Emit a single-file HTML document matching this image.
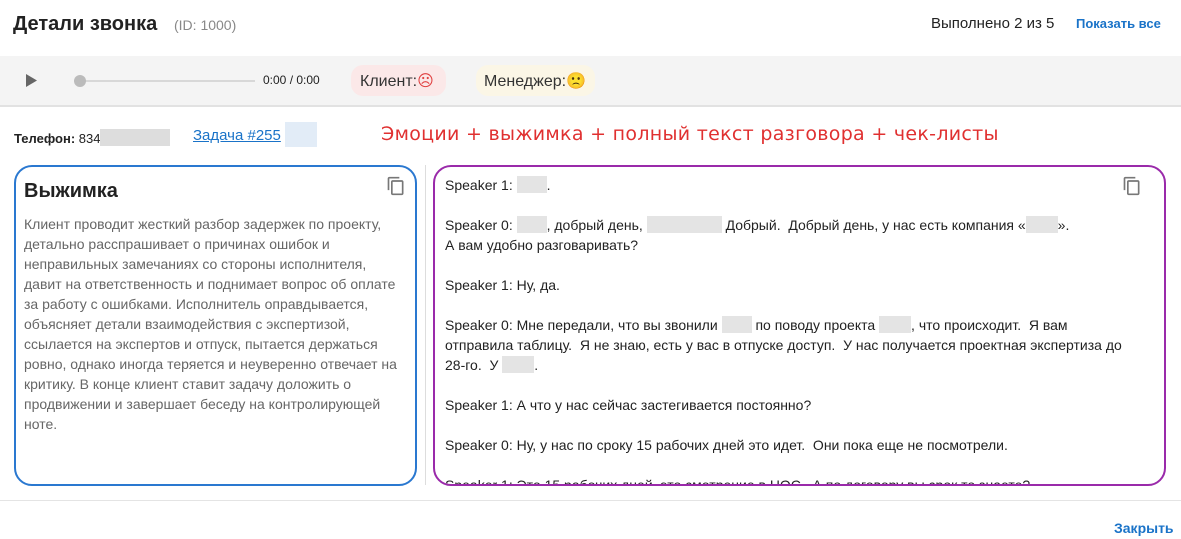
<!DOCTYPE html>
<html><head><meta charset="utf-8"><style>
body{margin:0;width:1181px;height:539px;overflow:hidden;background:#fff;font-family:"Liberation Sans",sans-serif;position:relative;color:#222}
.a{position:absolute}
.blur{display:inline-block;background:#e4e4e4;height:17px;vertical-align:-3px}
.tr p{margin:0 0 20px 0}
</style></head><body>
<div class="a" style="left:13px;top:13px;font-size:20px;font-weight:bold;color:#222">Детали звонка</div>
<div class="a" style="left:174px;top:17px;font-size:14px;color:#888">(ID: 1000)</div>
<div class="a" style="left:931px;top:15px;font-size:15px;color:#222">Выполнено 2 из 5</div>
<div class="a" style="left:1076px;top:16px;font-size:13px;color:#1a73c8;font-weight:bold">Показать все</div>
<div class="a" style="left:0;top:56px;width:1181px;height:49px;background:#f4f4f4;border-bottom:2px solid #e2e2e2"></div>
<svg class="a" style="left:26px;top:74px" width="11" height="13"><path d="M0 0L11 6.5L0 13Z" fill="#666"/></svg>
<div class="a" style="left:80px;top:80px;width:175px;height:2px;background:#d8d8d8"></div>
<div class="a" style="left:74px;top:75px;width:12px;height:12px;border-radius:50%;background:#bbb"></div>
<div class="a" style="left:263px;top:73px;font-size:12px;color:#222">0:00 / 0:00</div>
<div class="a" style="left:351px;top:65px;width:95px;height:31px;border-radius:12px;background:#fbe8e8"></div>
<div class="a" style="left:360px;top:71px;font-size:16px;color:#333">Клиент:<span style="color:#e04040">☹</span></div>
<div class="a" style="left:476px;top:65px;width:119px;height:31px;border-radius:12px;background:#fbf6e6"></div>
<div class="a" style="left:484px;top:71px;font-size:16px;color:#333">Менеджер:<span style="color:#f0a020">🙁</span></div>
<div class="a" style="left:14px;top:129px;font-size:13px;color:#222;white-space:nowrap"><b>Телефон:</b> 834<span class="blur" style="width:70px;background:#ddd"></span></div>
<div class="a" style="left:193px;top:127px;font-size:15px;color:#1a73c8;text-decoration:underline">Задача #255</div>
<div class="a" style="left:285px;top:122px;width:32px;height:25px;background:#e2ecf7"></div>
<div class="a" style="left:381px;top:123px;font-size:19px;color:#e03030;font-family:'Comic Sans MS','DejaVu Sans',sans-serif;letter-spacing:0.3px;white-space:nowrap">Эмоции + выжимка + полный текст разговора + чек-листы</div>
<div class="a" style="left:14px;top:165px;width:399px;height:317px;border:2px solid #2a78d0;border-radius:18px"></div>
<div class="a" style="left:24px;top:180px;font-size:20px;font-weight:bold;color:#222">Выжимка</div>
<svg class="a" style="left:386px;top:176px" width="20" height="20" viewBox="0 0 24 24"><path d="M16 1H4c-1.1 0-2 .9-2 2v14h2V3h12V1zm3 4H8c-1.1 0-2 .9-2 2v14c0 1.1.9 2 2 2h11c1.1 0 2-.9 2-2V7c0-1.1-.9-2-2-2zm0 16H8V7h11v14z" fill="#777"/></svg>
<div class="a" style="left:24px;top:214px;width:380px;font-size:14px;line-height:20px;color:#666">Клиент проводит жесткий разбор задержек по проекту, детально расспрашивает о причинах ошибок и неправильных замечаниях со стороны исполнителя, давит на ответственность и поднимает вопрос об оплате за работу с ошибками. Исполнитель оправдывается, объясняет детали взаимодействия с экспертизой, ссылается на экспертов и отпуск, пытается держаться ровно, однако иногда теряется и неуверенно отвечает на критику. В конце клиент ставит задачу доложить о продвижении и завершает беседу на контролирующей ноте.</div>
<div class="a" style="left:425px;top:165px;width:1px;height:320px;background:#ddd"></div>
<div class="a" style="left:433px;top:165px;width:729px;height:317px;border:2px solid #9a2aaa;border-radius:18px;overflow:hidden">
<div class="tr" style="padding:8px 0 0 10px;font-size:14px;line-height:20px;color:#222;width:690px">
<p>Speaker 1: <span class="blur" style="width:30px"></span>.</p>
<p>Speaker 0: <span class="blur" style="width:30px"></span>, добрый день, <span class="blur" style="width:75px"></span> Добрый.&nbsp; Добрый день, у нас есть компания «<span class="blur" style="width:32px"></span>».<br>А вам удобно разговаривать?</p>
<p>Speaker 1: Ну, да.</p>
<p>Speaker 0: Мне передали, что вы звонили <span class="blur" style="width:30px"></span> по поводу проекта <span class="blur" style="width:32px"></span>, что происходит.&nbsp; Я вам отправила таблицу.&nbsp; Я не знаю, есть у вас в отпуске доступ.&nbsp; У нас получается проектная экспертиза до 28-го.&nbsp; У <span class="blur" style="width:32px"></span>.</p>
<p>Speaker 1: А что у нас сейчас застегивается постоянно?</p>
<p>Speaker 0: Ну, у нас по сроку 15 рабочих дней это идет.&nbsp; Они пока еще не посмотрели.</p>
<p>Speaker 1: Это 15 рабочих дней, это смотрение в ЦОС.&nbsp; А по договору вы срок то знаете?</p>
</div></div>
<svg class="a" style="left:1122px;top:176px" width="20" height="20" viewBox="0 0 24 24"><path d="M16 1H4c-1.1 0-2 .9-2 2v14h2V3h12V1zm3 4H8c-1.1 0-2 .9-2 2v14c0 1.1.9 2 2 2h11c1.1 0 2-.9 2-2V7c0-1.1-.9-2-2-2zm0 16H8V7h11v14z" fill="#777"/></svg>
<div class="a" style="left:0;top:500px;width:1181px;height:1px;background:#e4e4e4"></div>
<div class="a" style="left:1114px;top:520px;font-size:14px;font-weight:bold;color:#1a73c8">Закрыть</div>
</body></html>
